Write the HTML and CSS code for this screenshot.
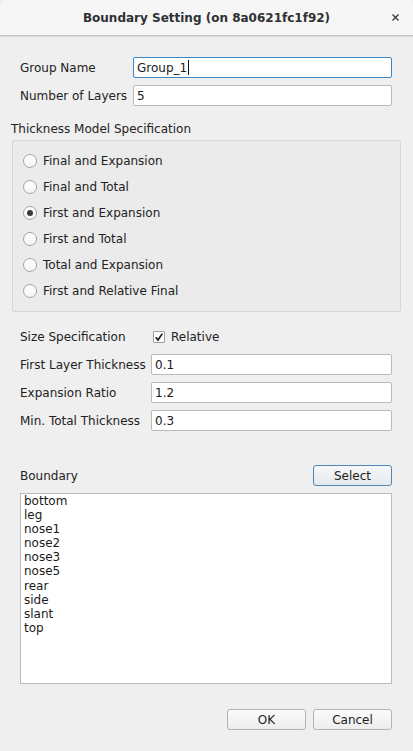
FILE: index.html
```html
<!DOCTYPE html>
<html>
<head>
<meta charset="utf-8">
<link rel="stylesheet" href="styles.css">
</head>
<body>
<div class="window">
  <div class="titlebar">
    <span class="title">Boundary Setting (on 8a0621fc1f92)</span>
    <span class="close"><svg width="9" height="9" viewBox="0 0 9 9"><path d="M1.5 1.5 L7.5 7.5 M7.5 1.5 L1.5 7.5" stroke="#3a3a3a" stroke-width="1.4" fill="none"/></svg></span>
  </div>
  <div class="content">
    <div class="grid grid-a">
      <label class="lbl">Group Name</label>
      <div class="input focus">Group_1<span class="caret"></span></div>
      <label class="lbl">Number of Layers</label>
      <div class="input">5</div>
    </div>

    <div class="section-title">Thickness Model Specification</div>
    <div class="groupbox">
      <div class="radio-row"><span class="radio"></span><span>Final and Expansion</span></div>
      <div class="radio-row"><span class="radio"></span><span>Final and Total</span></div>
      <div class="radio-row"><span class="radio checked"></span><span>First and Expansion</span></div>
      <div class="radio-row"><span class="radio"></span><span>First and Total</span></div>
      <div class="radio-row"><span class="radio"></span><span>Total and Expansion</span></div>
      <div class="radio-row"><span class="radio"></span><span>First and Relative Final</span></div>
    </div>

    <div class="grid grid-b">
      <label class="lbl">Size Specification</label>
      <div class="check-wrap">
        <span class="checkbox"><svg width="10" height="10" viewBox="0 0 10 10"><path d="M1.8 5.2 L4 8 L8.3 1.6" stroke="#1e1e1e" stroke-width="1.7" fill="none" stroke-linejoin="miter"/></svg></span>
        <span>Relative</span>
      </div>
      <label class="lbl">First Layer Thickness</label>
      <div class="input">0.1</div>
      <label class="lbl">Expansion Ratio</label>
      <div class="input">1.2</div>
      <label class="lbl">Min. Total Thickness</label>
      <div class="input">0.3</div>
    </div>

    <div class="boundary-head">
      <span class="lbl">Boundary</span>
      <button class="btn default">Select</button>
    </div>
    <div class="listbox">
      <div>bottom</div>
      <div>leg</div>
      <div>nose1</div>
      <div>nose2</div>
      <div>nose3</div>
      <div>nose5</div>
      <div>rear</div>
      <div>side</div>
      <div>slant</div>
      <div>top</div>
    </div>

    <div class="actions">
      <button class="btn">OK</button>
      <button class="btn">Cancel</button>
    </div>
  </div>
</div>
</body>
</html>
```

FILE: styles.css
```css
html, body {
  margin: 0;
  padding: 0;
  background: #efefef;
}
body {
  font-family: "DejaVu Sans", "Liberation Sans", sans-serif;
  font-size: 12px;
  color: #222222;
}
.window {
  width: 413px;
  height: 751px;
  background: #efefef;
  display: flex;
  flex-direction: column;
}
.titlebar {
  height: 35px;
  background: #f6f6f6;
  border-bottom: 1px solid #c4c4c4;
  border-radius: 6px 6px 0 0;
  display: flex;
  align-items: center;
  justify-content: center;
  position: relative;
  box-shadow: 0 1px 0 #dcdcdc;
}
.title {
  font-weight: bold;
  font-size: 12px;
  color: #2e3134;
  letter-spacing: 0;
}
.close {
  position: absolute;
  right: 13px;
  top: 13px;
  width: 9px;
  height: 9px;
  display: flex;
}
.content {
  display: flex;
  flex-direction: column;
}
.grid {
  display: grid;
  row-gap: 7px;
  padding: 0 21px 0 20px;
  align-items: center;
}
.grid-a {
  grid-template-columns: 113px 1fr;
  margin-top: 21px;
}
.grid-b {
  grid-template-columns: 131px 1fr;
  margin-top: 14px;
  grid-auto-rows: 21px;
}
.lbl {
  color: #222222;
  white-space: nowrap;
}
.input {
  height: 21px;
  box-sizing: border-box;
  border: 1px solid #bababa;
  border-radius: 2px;
  background: #ffffff;
  padding: 0 3px;
  display: flex;
  align-items: center;
  color: #1a1a1a;
}
.input.focus {
  border-color: #3d88c4;
}
.caret {
  display: inline-block;
  width: 1px;
  height: 15px;
  background: #111;
  margin-left: 1px;
}
.section-title {
  margin: 16px 0 0 11px;
  line-height: 14px;
  height: 14px;
}
.groupbox {
  margin: 4px 12px 0 12px;
  border: 1px solid #d6d6d6;
  border-radius: 2px;
  background: #ebebeb;
  padding: 7px 0 7px 10px;
  display: flex;
  flex-direction: column;
}
.radio-row {
  height: 26px;
  display: flex;
  align-items: center;
  gap: 6px;
}
.radio {
  width: 14px;
  height: 14px;
  box-sizing: border-box;
  border: 1px solid #a4a4a4;
  border-radius: 50%;
  background: linear-gradient(#ffffff, #f4f4f4);
  display: flex;
  align-items: center;
  justify-content: center;
}
.radio.checked::after {
  content: "";
  width: 6px;
  height: 6px;
  border-radius: 50%;
  background: #3a3a3a;
}
.check-wrap {
  display: flex;
  align-items: center;
  gap: 6px;
  padding-left: 2px;
}
.checkbox {
  width: 12px;
  height: 12px;
  box-sizing: border-box;
  border: 1px solid #9e9e9e;
  border-radius: 1px;
  background: #ffffff;
  display: flex;
  align-items: center;
  justify-content: center;
}
.boundary-head {
  margin: 34px 21px 0 20px;
  display: flex;
  justify-content: space-between;
  align-items: center;
}
.btn {
  width: 79px;
  height: 21px;
  box-sizing: border-box;
  border: 1px solid #b4b4b4;
  border-radius: 3px;
  background: linear-gradient(#fbfbfb, #ededed);
  font-family: "DejaVu Sans", "Liberation Sans", sans-serif;
  font-size: 12px;
  color: #1e1e1e;
  padding: 0;
  margin: 0;
}
.btn.default {
  border-color: #4f87b4;
  background: linear-gradient(#f5f7f9, #e6e9ec);
}
.listbox {
  margin: 7px 21px 0 20px;
  height: 191px;
  box-sizing: border-box;
  border: 1px solid #bcbcbc;
  background: #ffffff;
  padding: 0 3px;
  line-height: 14.1px;
  color: #1a1a1a;
}
.actions {
  margin: 25px 21px 0 0;
  display: flex;
  justify-content: flex-end;
  gap: 7px;
}
```
